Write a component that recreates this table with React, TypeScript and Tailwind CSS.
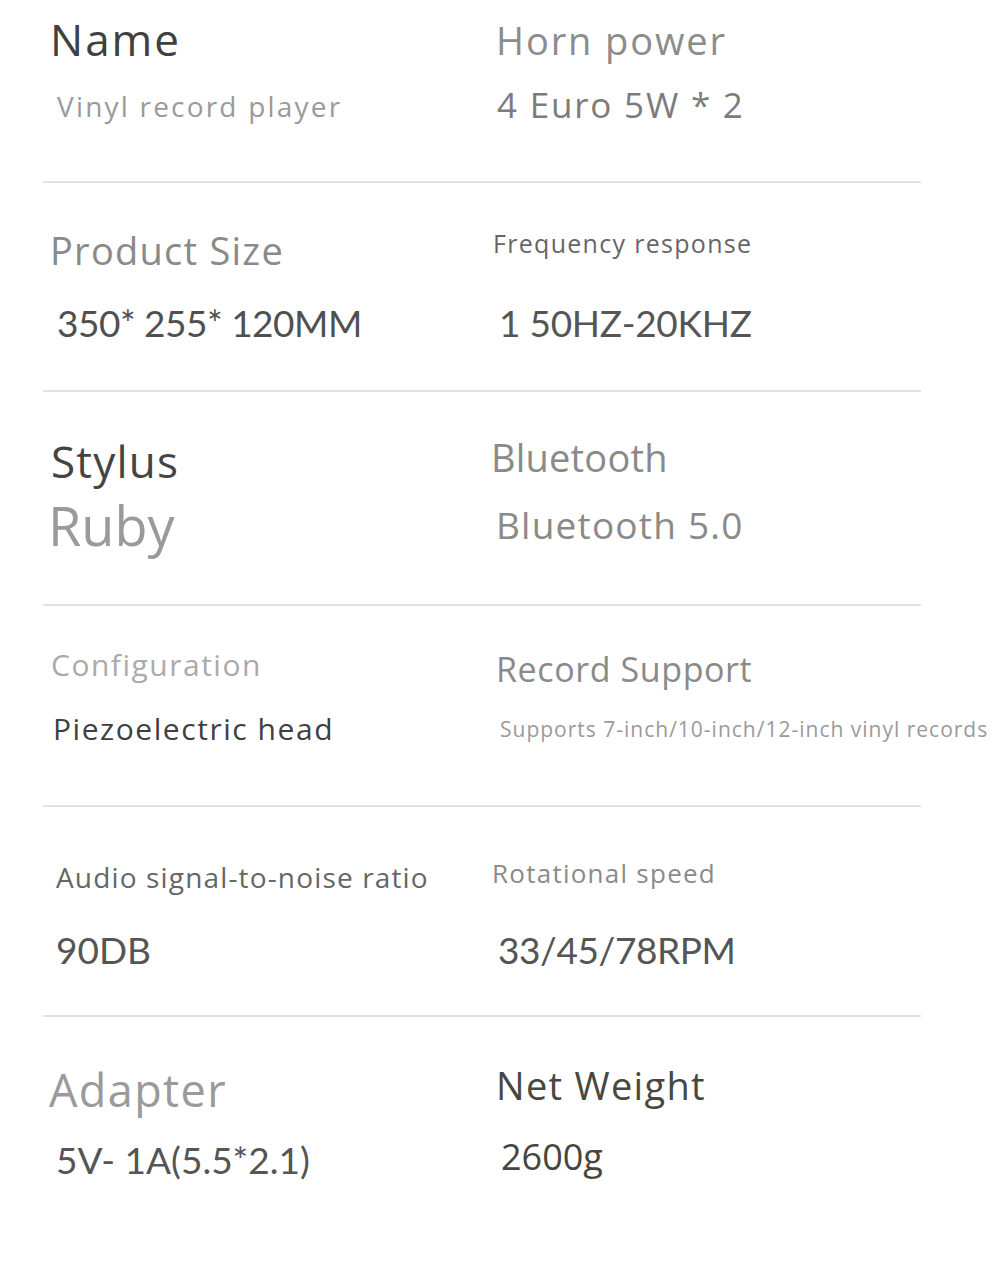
type Cell = {
  label: string;
  labelClass: string;
  value: string;
  valueClass: string;
};

type Row = {
  height: string;
  left: Cell;
  right: Cell;
};

const sans = "font-['Open_Sans',sans-serif]";
const num = "font-['Lato',sans-serif]";

const rows: Row[] = [
  {
    height: "h-[183px]",
    left: {
      label: "Name",
      labelClass: `${sans} mt-[17px] tracking-[2px] text-[44px] text-[#404040]`,
      value: "Vinyl record player",
      valueClass: `${sans} mt-[31px] ml-[7px] tracking-[2.2px] text-[28px] text-[#9a9a9a]`,
    },
    right: {
      label: "Horn power",
      labelClass: `${sans} mt-[21px] ml-[3px] tracking-[1.9px] text-[38px] text-[#8c8c8c]`,
      value: "4 Euro 5W * 2",
      valueClass: `${sans} mt-[28px] ml-[4px] tracking-[1.8px] text-[35px] text-[#7c7c7c]`,
    },
  },
  {
    height: "h-[209px]",
    left: {
      label: "Product Size",
      labelClass: `${sans} mt-[48px] tracking-[1.25px] text-[38px] text-[#8a8a8a]`,
      value: "350* 255* 120MM",
      valueClass: `${num} mt-[35px] ml-[7px] tracking-[-0.5px] text-[37px] text-[#505050]`,
    },
    right: {
      label: "Frequency response",
      labelClass: `${sans} mt-[48px] tracking-[1.3px] text-[25px] text-[#666666]`,
      value: "1 50HZ-20KHZ",
      valueClass: `${num} mt-[48px] ml-[6px] tracking-[-0.25px] text-[37px] text-[#555555]`,
    },
  },
  {
    height: "h-[214px]",
    left: {
      label: "Stylus",
      labelClass: `${sans} mt-[47px] ml-[1px] tracking-[1.2px] text-[44px] text-[#444444]`,
      value: "Ruby",
      valueClass: `${sans} mt-[15px] -ml-[2px] text-[54px] text-[#9a9a9a]`,
    },
    right: {
      label: "Bluetooth",
      labelClass: `${sans} mt-[46px] -ml-[2px] tracking-[0.2px] text-[38px] text-[#8a8a8a]`,
      value: "Bluetooth 5.0",
      valueClass: `${sans} mt-[30px] ml-[3px] tracking-[1.2px] text-[37px] text-[#8a8a8a]`,
    },
  },
  {
    height: "h-[201px]",
    left: {
      label: "Configuration",
      labelClass: `${sans} mt-[44px] ml-[1px] tracking-[1.5px] text-[30px] text-[#aaaaaa]`,
      value: "Piezoelectric head",
      valueClass: `${sans} mt-[34px] ml-[3px] tracking-[1.55px] text-[30px] text-[#404040]`,
    },
    right: {
      label: "Record Support",
      labelClass: `${sans} mt-[46px] ml-[3px] tracking-[0.6px] text-[34px] text-[#8a8a8a]`,
      value: "Supports 7-inch/10-inch/12-inch vinyl records",
      valueClass: `${sans} mt-[33px] ml-[7px] tracking-[1px] text-[21px] text-[#9a9a9a] whitespace-nowrap`,
    },
  },
  {
    height: "h-[210px]",
    left: {
      label: "Audio signal-to-noise ratio",
      labelClass: `${sans} mt-[56px] ml-[6px] tracking-[1.15px] text-[28px] text-[#666666]`,
      value: "90DB",
      valueClass: `${num} mt-[40px] ml-[6px] text-[37px] text-[#555555]`,
    },
    right: {
      label: "Rotational speed",
      labelClass: `${sans} mt-[53px] -ml-[1px] tracking-[1.25px] text-[26px] text-[#8a8a8a]`,
      value: "33/45/78RPM",
      valueClass: `${num} mt-[45px] ml-[5px] tracking-[-0.4px] text-[37px] text-[#555555]`,
    },
  },
  {
    height: "h-[255px]",
    left: {
      label: "Adapter",
      labelClass: `${sans} mt-[50px] -ml-[1px] tracking-[1.4px] text-[45px] text-[#9a9a9a]`,
      value: "5V- 1A(5.5*2.1)",
      valueClass: `${num} mt-[29px] ml-[6px] text-[37px] text-[#555555]`,
    },
    right: {
      label: "Net Weight",
      labelClass: `${sans} mt-[49px] ml-[3px] tracking-[1.3px] text-[38px] text-[#48483f]`,
      value: "2600g",
      valueClass: `${sans} mt-[35px] ml-[8px] text-[36px] text-[#46463e]`,
    },
  },
];

function SpecCell({ cell, className }: { cell: Cell; className: string }) {
  return (
    <div className={`flex flex-col items-start ${className}`}>
      <div className={`leading-none whitespace-nowrap ${cell.labelClass}`}>{cell.label}</div>
      <div className={`leading-none whitespace-nowrap ${cell.valueClass}`}>{cell.value}</div>
    </div>
  );
}

export default function App() {
  return (
    <div className="w-[1000px] h-[1272px] bg-white overflow-hidden">
      <div className="ml-[43px] w-[878px]">
        {rows.map((row, i) => (
          <div
            key={i}
            className={`grid grid-cols-[450px_1fr] ${row.height} ${
              i < rows.length - 1 ? "border-b-2 border-[#e2e2e2]" : ""
            }`}
          >
            <SpecCell cell={row.left} className="pl-[7px]" />
            <SpecCell cell={row.right} className="" />
          </div>
        ))}
      </div>
    </div>
  );
}
